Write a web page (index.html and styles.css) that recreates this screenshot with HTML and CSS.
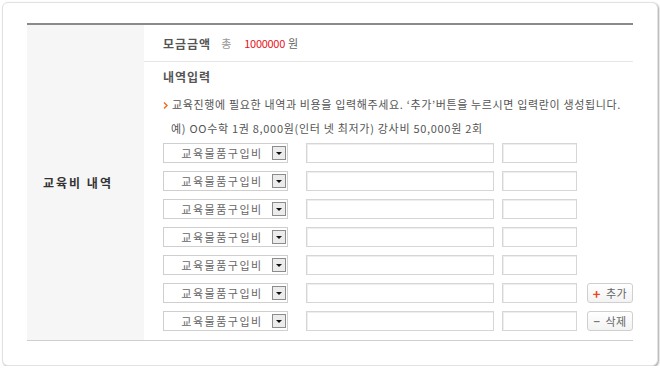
FILE: index.html
```html
<!DOCTYPE html>
<html>
<head>
	<title>교육비 내역</title>
	<meta name="viewport" content="width=device-width, initial-scale=1"><link rel="stylesheet" href="styles.css">
</head>
<body>
	<section class="card">
		<div class="field">
			<div class="field-label">교육비 내역</div>
			<div class="field-body">
				<div class="total">
					<span class="total-title">모금금액</span>
					<span class="total-unit">총</span>
					<span class="total-amount">1000000</span>
					<span class="total-won">원</span>
				</div>
				<div class="detail">
					<h2 class="detail-title">내역입력</h2>
					<p class="guide"><svg class="chev" width="5" height="7" viewBox="0 0 5 7"><path d="M1 0.5 L4 3.5 L1 6.5" fill="none" stroke="#f26a1b" stroke-width="1.4"/></svg>교육진행에 필요한 내역과 비용을 입력해주세요. ‘추가’버튼을 누르시면 입력란이 생성됩니다.</p>
					<p class="guide example">예) OO수학 1권 8,000원(인터 넷 최저가) 강사비 50,000원 2회</p>
					<div class="rows">
						<div class="row">
							<div class="select"><span class="select-text">교육물품구입비</span><span class="select-btn"><i></i></span></div>
							<input class="input name" type="text">
							<input class="input cost" type="text">
						</div>
						<div class="row">
							<div class="select"><span class="select-text">교육물품구입비</span><span class="select-btn"><i></i></span></div>
							<input class="input name" type="text">
							<input class="input cost" type="text">
						</div>
						<div class="row">
							<div class="select"><span class="select-text">교육물품구입비</span><span class="select-btn"><i></i></span></div>
							<input class="input name" type="text">
							<input class="input cost" type="text">
						</div>
						<div class="row">
							<div class="select"><span class="select-text">교육물품구입비</span><span class="select-btn"><i></i></span></div>
							<input class="input name" type="text">
							<input class="input cost" type="text">
						</div>
						<div class="row">
							<div class="select"><span class="select-text">교육물품구입비</span><span class="select-btn"><i></i></span></div>
							<input class="input name" type="text">
							<input class="input cost" type="text">
						</div>
						<div class="row">
							<div class="select"><span class="select-text">교육물품구입비</span><span class="select-btn"><i></i></span></div>
							<input class="input name" type="text">
							<input class="input cost" type="text">
							<button class="btn"><span class="plus">+</span>추가</button>
						</div>
						<div class="row">
							<div class="select"><span class="select-text">교육물품구입비</span><span class="select-btn"><i></i></span></div>
							<input class="input name" type="text">
							<input class="input cost" type="text">
							<button class="btn"><span class="minus">−</span>삭제</button>
						</div>
					</div>
				</div>
			</div>
		</div>
	</section>
</body>
</html>
```

FILE: styles.css
```css
body{
	margin: 0;
	background-color: #fff;
	font-family: "Noto Sans CJK KR", "Noto Sans", sans-serif;
	font-size: 11px;
	color: #555;
}
.card{
	margin: 2px 0 0 2px;
	width: 606px;
	height: 318px;
	padding: 20px 24px 24px 24px;
	border: 1px solid #e2e2e2;
	border-radius: 6px;
	box-shadow: 1px 1px 2px rgba(0,0,0,.35);
	background-color: #fff;
}
.field{
	display: flex;
	border-top: 2px solid #8a8a8a;
	border-bottom: 1px solid #cfcfcf;
}
.field-label{
	width: 102px;
	padding-left: 16px;
	display: flex;
	align-items: center;
	background-color: #f6f6f6;
	font-size: 12px;
	font-weight: bold;
	color: #333;
	letter-spacing: 2px;
}
.field-body{
	flex: 1;
}
.total{
	height: 36px;
	padding-left: 19px;
	display: flex;
	align-items: center;
	border-bottom: 1px solid #e6e6e6;
}
.total-title{
	font-size: 12px;
	font-weight: bold;
	color: #555;
	letter-spacing: 1px;
	margin-right: 10px;
}
.total-unit{
	color: #999;
	margin-right: 13px;
}
.total-amount{
	color: #e8141c;
	letter-spacing: -0.3px;
	margin-right: 3px;
}
.total-won{
	color: #666;
}
.detail{
	padding: 7px 0 9px 19px;
}
.detail-title{
	margin: 0;
	font-size: 12px;
	line-height: 16px;
	font-weight: bold;
	color: #555;
	letter-spacing: 1px;
}
.guide{
	margin: 0;
	line-height: 24px;
	color: #555;
	letter-spacing: 0.65px;
	white-space: nowrap;
}
.guide:first-of-type{
	margin-top: 7px;
}
.chev{
	margin-right: 4px;
	vertical-align: 0;
}
.example{
	padding-left: 8px;
	letter-spacing: 0.7px;
}
.rows{
	margin-top: 3px;
	display: flex;
	flex-direction: column;
	gap: 8px;
}
.row{
	display: flex;
	align-items: center;
	height: 20px;
}
.select{
	width: 123px;
	height: 18px;
	border: 1px solid #cfcfcf;
	display: flex;
	align-items: center;
	background-color: #fff;
}
.select-text{
	flex: 1;
	padding-left: 8px;
	text-align: center;
	color: #666;
	letter-spacing: 1.5px;
}
.select-btn{
	width: 12px;
	height: 12px;
	margin-right: 1px;
	border: 1px solid #8c8c8c;
	background-color: #ececec;
	display: flex;
	align-items: center;
	justify-content: center;
}
.select-btn i{
	width: 0;
	height: 0;
	border-left: 3px solid transparent;
	border-right: 3px solid transparent;
	border-top: 3px solid #111;
}
.input{
	box-sizing: border-box;
	height: 20px;
	margin: 0;
	padding: 0 3px;
	border: 1px solid #d6d6d6;
	box-shadow: inset 1px 1px 0 #eee;
	background-color: #fff;
}
.name{
	width: 188px;
	margin-left: 18px;
}
.cost{
	width: 75px;
	margin-left: 8px;
}
.btn{
	box-sizing: border-box;
	width: 46px;
	height: 20px;
	margin-left: 10px;
	padding: 0;
	border: 1px solid #cfcfcf;
	border-radius: 3px;
	background: linear-gradient(#fff, #f3f3f3);
	font-family: "Noto Sans CJK KR", "Noto Sans", sans-serif;
	font-size: 11px;
	color: #666;
	letter-spacing: 0.5px;
	display: flex;
	align-items: center;
	justify-content: center;
}
.plus{
	color: #f0431a;
	font-weight: bold;
	font-size: 13px;
	margin-right: 5px;
}
.minus{
	color: #777;
	font-weight: bold;
	margin-right: 5px;
}
```
